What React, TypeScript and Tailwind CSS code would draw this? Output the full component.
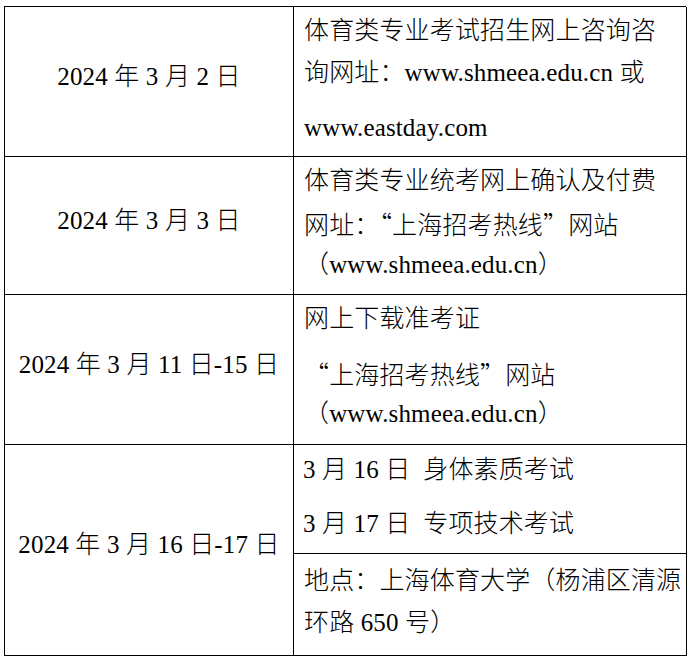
import React from "react";

const F = "font-['Liberation_Serif','Noto_Sans_CJK_SC',serif] text-[25px] text-black tracking-[0.15px]";

function L({ children, h = 42, className = "" }: { children: React.ReactNode; h?: number; className?: string }) {
  return (
    <div className={"whitespace-nowrap " + className} style={{ height: h, lineHeight: h + "px" }}>
      {children}
    </div>
  );
}

function Q({ c }: { c: string }) {
  return <span className="font-['Noto_Sans_CJK_SC',sans-serif] font-light">{c}</span>;
}

function Left({ children, h }: { children: React.ReactNode; h: number }) {
  return (
    <div
      className="flex items-center justify-center border-r border-b border-black pb-[10px] whitespace-nowrap"
      style={{ height: h }}
    >
      {children}
    </div>
  );
}

export default function App() {
  return (
    <div className="min-h-[666px] bg-white pt-[6px] pl-[4px]" lang="zh-CN">
      <div className={"grid w-[682px] grid-cols-[289px_393px] border-l border-t border-black font-light " + F}>
        {/* Row 1 */}
        <Left h={150}>2024 年 3 月 2 日</Left>
        <div className="h-[150px] border-r border-b border-black pl-[10px] pt-[3px]">
          <L>体育类专业考试招生网上咨询咨</L>
          <L>询网址：www.shmeea.edu.cn 或</L>
          <L className="mt-[13px]">www.eastday.com</L>
        </div>

        {/* Row 2 */}
        <Left h={138}>2024 年 3 月 3 日</Left>
        <div className="h-[138px] border-r border-b border-black pl-[10px] pt-[3px]">
          <L>体育类专业统考网上确认及付费</L>
          <L>
            网址：<Q c="“" />上海招考热线<Q c="”" />网站
          </L>
          <L>（www.shmeea.edu.cn）</L>
        </div>

        {/* Row 3 */}
        <Left h={150}>2024 年 3 月 11 日-15 日</Left>
        <div className="h-[150px] border-r border-b border-black pl-[10px] pt-[3px]">
          <L>网上下载准考证</L>
          <L className="mt-[12px]">
            <Q c="“" />上海招考热线<Q c="”" />网站
          </L>
          <L h={40}>（www.shmeea.edu.cn）</L>
        </div>

        {/* Row 4 */}
        <Left h={211}>2024 年 3 月 16 日-17 日</Left>
        <div className="flex h-[211px] flex-col border-r border-b border-black">
          <div className="h-[109px] border-b border-black pl-[9px] pt-[4px]">
            <L>3 月 16 日&nbsp;&nbsp;身体素质考试</L>
            <L className="mt-[12px]">3 月 17 日&nbsp;&nbsp;专项技术考试</L>
          </div>
          <div className="flex-1 pl-[10px] pt-[6px]">
            <L>地点：上海体育大学（杨浦区清源</L>
            <L>环路 650 号）</L>
          </div>
        </div>
      </div>
    </div>
  );
}
